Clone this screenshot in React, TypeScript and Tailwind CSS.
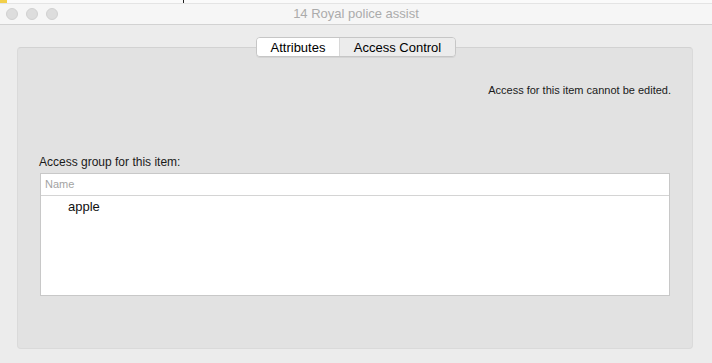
import React from "react";

const font = { fontFamily: '"Liberation Sans", Arial, sans-serif' };

const TrafficLight: React.FC = () => (
  <div className="w-[12px] h-[12px] rounded-full bg-[#dddddd] border border-[#d1d1d1]" />
);

const App: React.FC = () => {
  return (
    <div className="w-[712px] h-[363px] bg-[#ececec] flex flex-col overflow-hidden" style={font}>
      {/* strip of whatever lies behind the window */}
      <div className="h-[3px] flex bg-[#fafafa] shrink-0">
        <div className="w-[7px] bg-[#f2cf4a]" />
        <div className="w-[176px]" />
        <div className="w-[1px] bg-[#222222]" />
      </div>

      {/* title bar */}
      <div className="h-[22px] shrink-0 bg-[#f6f6f6] border-t border-[#e4e4e4] border-b border-b-[#d2d2d2] flex items-center relative">
        <div className="flex items-center gap-[8px] pl-[6px]">
          <TrafficLight />
          <TrafficLight />
          <TrafficLight />
        </div>
        <div className="absolute inset-0 flex items-center justify-center text-[13px] text-[#ababab]">
          14 Royal police assist
        </div>
      </div>

      {/* window body */}
      <div className="flex-1 flex flex-col pt-[12px]">
        <div className="self-start ml-[256px] relative z-10 flex h-[20px] rounded-[4px] border border-[#c6c6c6] shadow-[0_1px_0_rgba(0,0,0,0.06)] overflow-hidden text-[13px] text-black leading-none">
          <div className="w-[82px] bg-white flex items-center justify-center">Attributes</div>
          <div className="w-[116px] bg-[#ececec] border-l border-[#d8d8d8] flex items-center justify-center">
            Access Control
          </div>
        </div>

        <div className="-mt-[10px] ml-[17px] w-[676px] h-[302px] bg-[#e2e2e2] border border-[#dadada] border-t-[#d2d2d2] rounded-[4px] flex flex-col pt-[36px] pl-[21px] pr-[21px]">
          <div className="text-[11px] leading-[13px] text-[#1a1a1a] text-right">
            Access for this item cannot be edited.
          </div>
          <div className="mt-[58px] text-[12px] leading-[14px] text-[#1a1a1a]">Access group for this item:</div>
          <div className="mt-[4px] ml-[1px] w-[630px] h-[123px] bg-white border border-[#c8c8c8] flex flex-col">
            <div className="h-[22px] border-b border-[#d4d4d4] flex items-center pl-[4px] text-[11px] text-[#a3a3a3]">
              Name
            </div>
            <div className="h-[21px] flex items-center pl-[27px] text-[13px] text-[#111111]">apple</div>
          </div>
        </div>
      </div>
    </div>
  );
};

export default App;
